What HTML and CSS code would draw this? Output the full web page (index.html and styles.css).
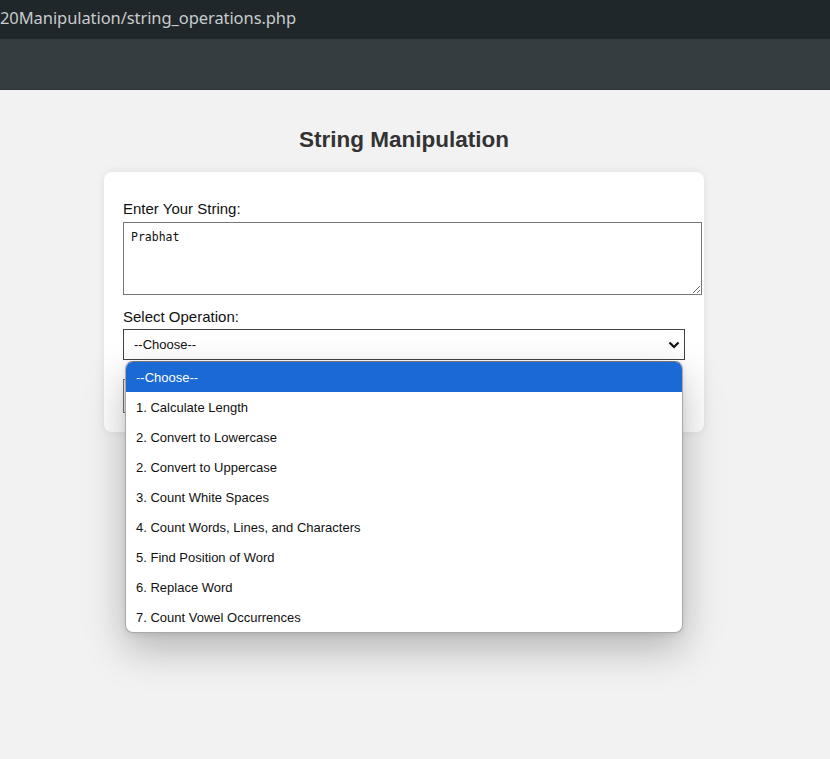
FILE: index.html
```html
<!DOCTYPE html>
<html lang="en">
<head>
<meta charset="utf-8">
<title>String Manipulation</title>
<link rel="stylesheet" href="styles.css">
</head>
<body>
<div class="topbar"><span class="url">20Manipulation/string_operations.php</span></div>
<div class="toolbar"></div>
<main class="page">
  <h2 class="title">String Manipulation</h2>
  <form class="card">
    <label class="label" for="str">Enter Your String:</label>
    <textarea id="str" class="text">Prabhat</textarea>
    <label class="label label-op" for="op">Select Operation:</label>
    <div class="select-wrap">
      <select id="op" class="select">
        <option>--Choose--</option>
      </select>
      <svg class="chev" width="12" height="8" viewBox="0 0 12 8"><path d="M1.5 1.5 L6 6 L10.5 1.5" fill="none" stroke="#111" stroke-width="2.2"/></svg>
      <ul class="dropdown">
        <li class="opt opt-active">--Choose--</li>
        <li class="opt">1. Calculate Length</li>
        <li class="opt">2. Convert to Lowercase</li>
        <li class="opt">2. Convert to Uppercase</li>
        <li class="opt">3. Count White Spaces</li>
        <li class="opt">4. Count Words, Lines, and Characters</li>
        <li class="opt">5. Find Position of Word</li>
        <li class="opt">6. Replace Word</li>
        <li class="opt">7. Count Vowel Occurrences</li>
      </ul>
    </div>
    <button type="button" class="btn" aria-label="Submit"></button>
  </form>
</main>
</body>
</html>
```

FILE: styles.css
```css
html, body {
  margin: 0;
  padding: 0;
  background: #f2f2f2;
  font-family: "Liberation Sans", Arial, sans-serif;
  color: #111;
}

.topbar {
  height: 39px;
  background: #20272a;
  display: flex;
  align-items: center;
}

.url {
  font-family: "Noto Sans", "Open Sans", sans-serif;
  font-size: 16.5px;
  color: #c8cbcd;
  letter-spacing: -0.08px;
  line-height: 1;
  margin-top: -2px;
}

.toolbar {
  height: 50px;
  background: #363d40;
  border-bottom: 1px solid #2b3134;
}

.page {
  padding: 0 22px 0 0;
  min-height: 669px;
  box-sizing: border-box;
}

.title {
  margin: 37px 0 0;
  text-align: center;
  font-size: 22.5px;
  line-height: 26px;
  font-weight: bold;
  color: #333;
}

.card {
  width: 562px;
  margin: 19px auto 0;
  padding: 20px 19px 19px;
  background: #fff;
  border-radius: 8px;
  box-shadow: 0 0 10px rgba(0, 0, 0, 0.08);
  display: flex;
  flex-direction: column;
  align-items: flex-start;
}

.label {
  display: block;
  font-size: 15px;
  line-height: 18px;
  margin: 8px 0 4px;
  color: #111;
}

.label-op {
  margin-top: 13px;
  margin-bottom: 3px;
}

.text {
  width: 579px;
  height: 73px;
  box-sizing: border-box;
  margin: 0;
  padding: 7px 7px;
  border: 1px solid #767676;
  font-family: "DejaVu Sans Mono", "Liberation Mono", monospace;
  font-size: 11.5px;
  line-height: 14px;
  color: #111;
  resize: both;
}

.select-wrap {
  position: relative;
  width: 562px;
}

.select {
  display: block;
  width: 562px;
  height: 31px;
  box-sizing: border-box;
  margin: 0;
  padding: 0 10px;
  border: 1px solid #444;
  border-radius: 0;
  background: #fff;
  -webkit-appearance: none;
  appearance: none;
  font-family: "Liberation Sans", Arial, sans-serif;
  font-size: 13px;
  color: #111;
}

.chev {
  position: absolute;
  right: 5px;
  top: 12px;
  pointer-events: none;
}

.dropdown {
  position: absolute;
  left: 2px;
  top: 32px;
  width: 558px;
  box-sizing: border-box;
  margin: 0;
  padding: 0;
  list-style: none;
  background: #fff;
  border: 1px solid #a9a9a9;
  border-top-color: #777;
  border-radius: 8px;
  overflow: hidden;
  box-shadow: 0 16px 40px rgba(0, 0, 0, 0.26), 0 2px 6px rgba(0, 0, 0, 0.08);
  z-index: 5;
}

.opt {
  height: 30px;
  line-height: 31px;
  padding: 0 10px;
  font-size: 13px;
  color: #111;
  white-space: nowrap;
}

.opt-active {
  background: #1a69d4;
  color: #fff;
}

.btn {
  margin-top: 19px;
  height: 34px;
  width: 100px;
  border: 1px solid #767676;
  background: #efefef;
}
```
